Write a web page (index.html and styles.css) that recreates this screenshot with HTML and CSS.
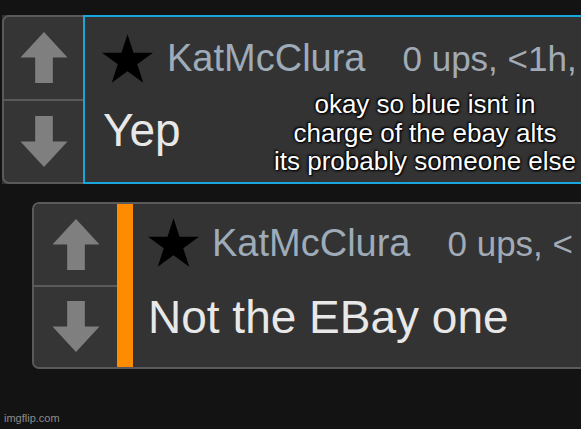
FILE: index.html
```html
<!DOCTYPE html>
<html lang="en">
<head>
    <meta charset="UTF-8">
    <meta name="viewport" content="width=device-width, initial-scale=1.0">
    <title>Comments</title>
    <link rel="stylesheet" href="styles.css">
</head>
<body>
    <div class="thread">
        <div class="comment comment-active">
            <div class="votes">
                <div class="vote vote-up">
                    <svg class="arrow" viewBox="0 0 48 52"><polygon points="24,0 48,26 33,26 33,52 15,52 15,26 0,26"/></svg>
                </div>
                <div class="vote">
                    <svg class="arrow" viewBox="0 0 48 52"><polygon points="15,0 33,0 33,26 48,26 24,52 0,26 15,26"/></svg>
                </div>
            </div>
            <div class="content">
                <div class="head">
                    <svg class="star" viewBox="0 0 100 95"><polygon points="50,0 61.8,36.2 100,36.2 69.1,58.8 80.9,95 50,72.6 19.1,95 30.9,58.8 0,36.2 38.2,36.2"/></svg>
                    <span class="names">
                        <span class="user">KatMcClura</span>
                        <span class="meta">0 ups, &lt;1h,</span>
                    </span>
                </div>
                <div class="text">Yep</div>
            </div>
        </div>

        <div class="comment comment-reply">
            <div class="votes">
                <div class="vote vote-up">
                    <svg class="arrow" viewBox="0 0 48 52"><polygon points="24,0 48,26 33,26 33,52 15,52 15,26 0,26"/></svg>
                </div>
                <div class="vote">
                    <svg class="arrow" viewBox="0 0 48 52"><polygon points="15,0 33,0 33,26 48,26 24,52 0,26 15,26"/></svg>
                </div>
            </div>
            <div class="content">
                <div class="head">
                    <svg class="star" viewBox="0 0 100 95"><polygon points="50,0 61.8,36.2 100,36.2 69.1,58.8 80.9,95 50,72.6 19.1,95 30.9,58.8 0,36.2 38.2,36.2"/></svg>
                    <span class="names">
                        <span class="user">KatMcClura</span>
                        <span class="meta">0 ups, &lt;</span>
                    </span>
                </div>
                <div class="text">Not the EBay one</div>
            </div>
        </div>
    </div>

    <div class="caption">okay so blue isnt in<br>charge of the ebay alts<br>its probably someone else</div>
    <div class="watermark">imgflip.com</div>
</body>
</html>
```

FILE: styles.css
```css
body {
    margin: 0;
    width: 581px;
    height: 429px;
    overflow: hidden;
    position: relative;
    background: #131313;
    font-family: 'Liberation Sans', Arial, sans-serif;
}
.thread {
    padding-top: 15px;
}
.comment {
    display: flex;
    width: 660px;
    box-sizing: border-box;
    background: #333333;
}
.comment-active {
    height: 169px;
    margin-left: 2px;
}
.comment-reply {
    height: 167px;
    margin-top: 18px;
    margin-left: 32px;
    border: 2px solid #5a5a5a;
    border-right: none;
    border-radius: 7px 0 0 7px;
}
.votes {
    display: flex;
    flex-direction: column;
    background: #353535;
    box-sizing: border-box;
}
.comment-active .votes {
    width: 81px;
    border: 2px solid #5a5a5a;
    border-right: none;
    border-radius: 7px 0 0 7px;
}
.comment-reply .votes {
    width: 83px;
    border-radius: 5px 0 0 5px;
}
.vote {
    flex: 1;
    display: flex;
    align-items: center;
    justify-content: center;
}
.vote-up {
    border-bottom: 2px solid #5a5a5a;
}
.arrow {
    width: 48px;
    height: 51px;
    fill: #7f7f7f;
}
.content {
    flex: 1;
    box-sizing: border-box;
}
.comment-active .content {
    border: 2px solid #19a6dc;
    padding-left: 17px;
}
.comment-reply .content {
    border-left: 16px solid #ff8c00;
    padding-left: 15px;
}
.head {
    display: flex;
    align-items: center;
    height: 82px;
}
.comment-reply .head {
    height: 77px;
}
.star {
    width: 51px;
    height: 49px;
    fill: #000;
    flex-shrink: 0;
}
.names {
    display: flex;
    align-items: baseline;
    white-space: nowrap;
    margin-left: 14px;
    line-height: 1;
}
.comment-reply .names {
    margin-left: 13px;
}
.user {
    font-size: 38px;
    color: #9eabb9;
}
.meta {
    font-size: 35px;
    color: #a2abb5;
    margin-left: 37px;
}
.text {
    font-size: 46px;
    line-height: 1;
    color: #e8e8e8;
    padding-top: 8px;
    padding-left: 1px;
    white-space: nowrap;
}
.comment-reply .text {
    padding-top: 13px;
    padding-left: 0;
}
.caption {
    position: absolute;
    left: 265px;
    top: 90px;
    width: 320px;
    text-align: center;
    font-size: 26px;
    line-height: 28.5px;
    color: #fff;
    text-shadow: 0 0 3px #000, 1px 1px 2px #000, -1px -1px 2px #000;
}
.watermark {
    position: absolute;
    left: 4px;
    top: 412px;
    font-size: 11px;
    color: #8c8c8c;
}
```
